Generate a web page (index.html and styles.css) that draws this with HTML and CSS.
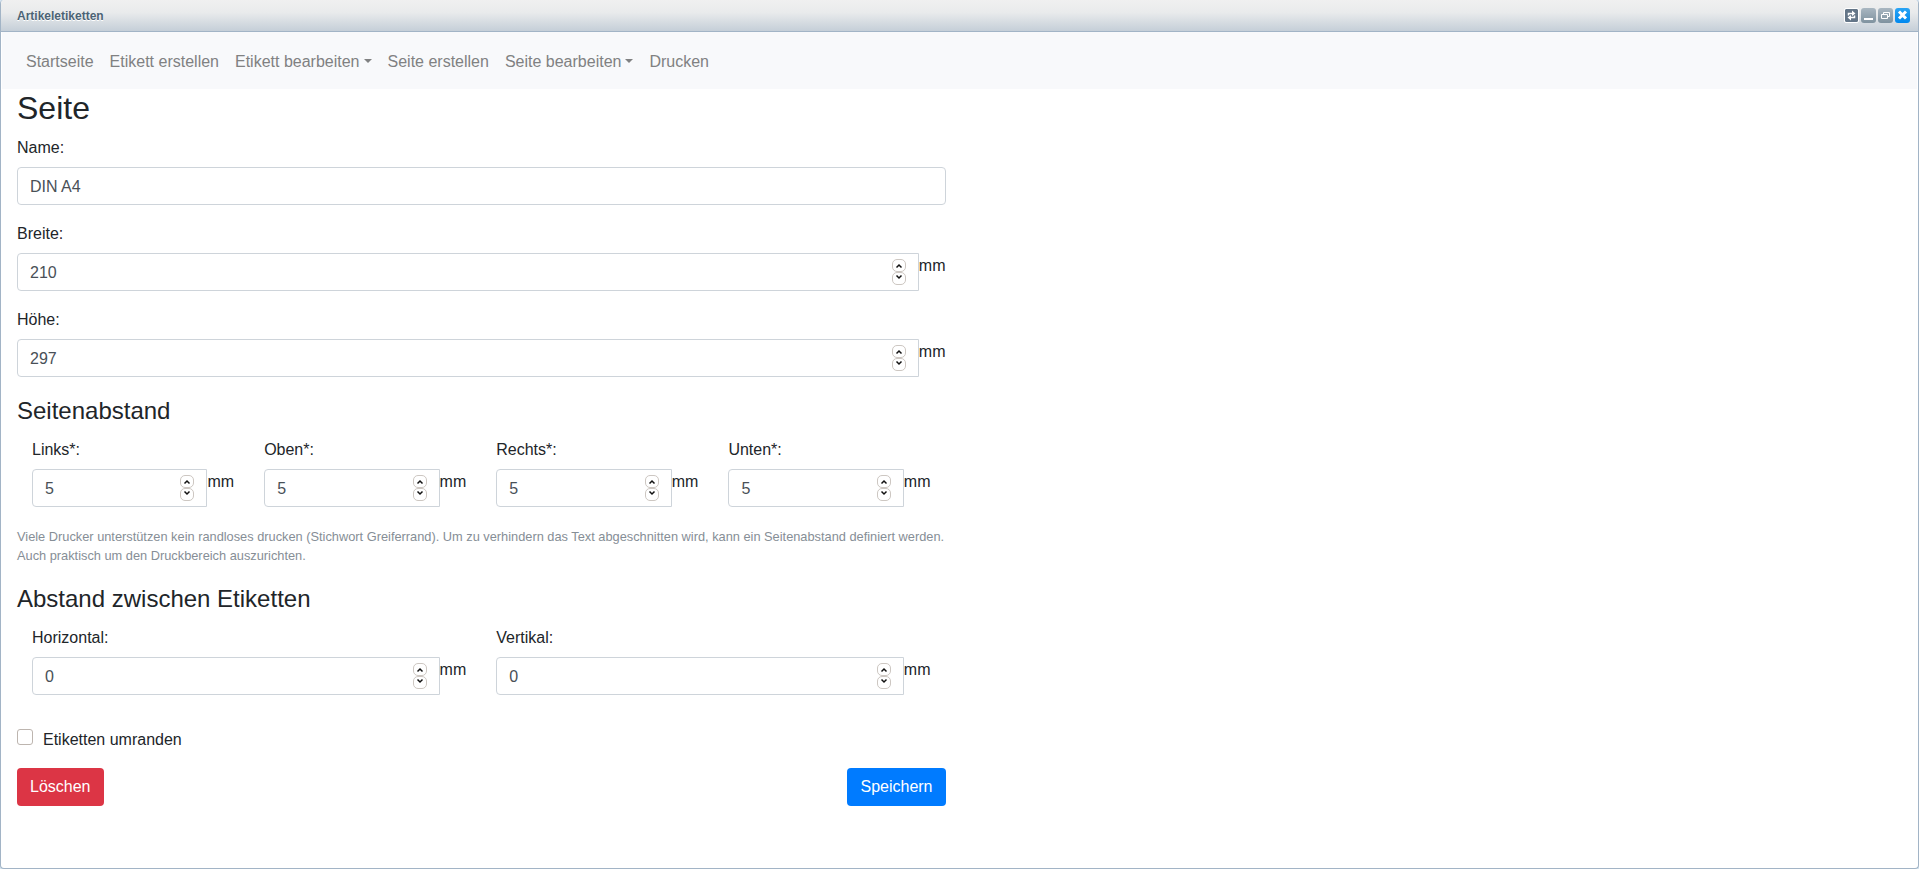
FILE: index.html
```html
<!DOCTYPE html>
<html lang="de">
<head>
<meta charset="utf-8">
<title>Artikeletiketten</title>
<link rel="stylesheet" href="styles.css">
</head>
<body>
<div class="window">
  <header class="titlebar">
    <span class="titlebar-text">Artikeletiketten</span>
    <div class="tools">
      <button class="tool tool-refresh" type="button" aria-label="Neu laden"><svg width="13" height="13" viewBox="0 0 13 13"><path d="M3.500 6.500V4.500H7.500M9.500 6.500V8.500H5.500" fill="none" stroke="#fff" stroke-width="1.500"/><path d="M7 1.500L10.500 4.500L7 7ZM6 6L2.500 8.500L6 11.500Z" fill="#fff"/></svg></button>
      <button class="tool" type="button" aria-label="Minimieren"><svg width="15" height="15" viewBox="0 0 15 15"><path d="M3 10h9v2H3z" fill="#fff"/></svg></button>
      <button class="tool" type="button" aria-label="Wiederherstellen"><svg width="15" height="15" viewBox="0 0 15 15"><path d="M5.500 6V4.500H11.500V8.500H10M3.500 6.500H9.500V10.500H3.500Z" fill="none" stroke="#fff"/></svg></button>
      <button class="tool tool-close" type="button" aria-label="Schließen"><svg width="15" height="15" viewBox="0 0 15 15"><path d="M4 3.500L11 10.500M11 3.500L4 10.500" fill="none" stroke="#fff" stroke-width="3"/></svg></button>
    </div>
  </header>
  <nav class="navbar">
    <a class="nav-link" href="#">Startseite</a>
    <a class="nav-link" href="#">Etikett erstellen</a>
    <a class="nav-link nav-drop" href="#">Etikett bearbeiten</a>
    <a class="nav-link" href="#">Seite erstellen</a>
    <a class="nav-link nav-drop" href="#">Seite bearbeiten</a>
    <a class="nav-link" href="#">Drucken</a>
  </nav>
  <main class="content">
    <h1 class="heading">Seite</h1>
    <form class="form">
      <div class="group">
        <label class="label" for="name">Name:</label>
        <input class="text-input" id="name" type="text" value="DIN A4">
      </div>
      <div class="group">
        <label class="label" for="breite">Breite:</label>
        <div class="measure">
          <div class="number"><input class="number-input" id="breite" type="number" value="210"><span class="stepper"><button class="step" type="button" aria-label="Mehr"><svg width="12" height="11" viewBox="0 0 12 11"><path d="M3.500 7.500L6 5L8.500 7.500"/></svg></button><button class="step" type="button" aria-label="Weniger"><svg width="12" height="11" viewBox="0 0 12 11"><path d="M3.500 2.500L6 5L8.500 2.500"/></svg></button></span></div>
          <span class="unit">mm</span>
        </div>
      </div>
      <div class="group">
        <label class="label" for="hoehe">Höhe:</label>
        <div class="measure">
          <div class="number"><input class="number-input" id="hoehe" type="number" value="297"><span class="stepper"><button class="step" type="button" aria-label="Mehr"><svg width="12" height="11" viewBox="0 0 12 11"><path d="M3.500 7.500L6 5L8.500 7.500"/></svg></button><button class="step" type="button" aria-label="Weniger"><svg width="12" height="11" viewBox="0 0 12 11"><path d="M3.500 2.500L6 5L8.500 2.500"/></svg></button></span></div>
          <span class="unit">mm</span>
        </div>
      </div>
      <fieldset class="section">
        <legend class="legend">Seitenabstand</legend>
        <div class="row">
          <div class="col">
            <label class="label" for="links">Links*:</label>
            <div class="measure">
              <div class="number"><input class="number-input" id="links" type="number" value="5"><span class="stepper"><button class="step" type="button" aria-label="Mehr"><svg width="12" height="11" viewBox="0 0 12 11"><path d="M3.500 7.500L6 5L8.500 7.500"/></svg></button><button class="step" type="button" aria-label="Weniger"><svg width="12" height="11" viewBox="0 0 12 11"><path d="M3.500 2.500L6 5L8.500 2.500"/></svg></button></span></div>
              <span class="unit">mm</span>
            </div>
          </div>
          <div class="col">
            <label class="label" for="oben">Oben*:</label>
            <div class="measure">
              <div class="number"><input class="number-input" id="oben" type="number" value="5"><span class="stepper"><button class="step" type="button" aria-label="Mehr"><svg width="12" height="11" viewBox="0 0 12 11"><path d="M3.500 7.500L6 5L8.500 7.500"/></svg></button><button class="step" type="button" aria-label="Weniger"><svg width="12" height="11" viewBox="0 0 12 11"><path d="M3.500 2.500L6 5L8.500 2.500"/></svg></button></span></div>
              <span class="unit">mm</span>
            </div>
          </div>
          <div class="col">
            <label class="label" for="rechts">Rechts*:</label>
            <div class="measure">
              <div class="number"><input class="number-input" id="rechts" type="number" value="5"><span class="stepper"><button class="step" type="button" aria-label="Mehr"><svg width="12" height="11" viewBox="0 0 12 11"><path d="M3.500 7.500L6 5L8.500 7.500"/></svg></button><button class="step" type="button" aria-label="Weniger"><svg width="12" height="11" viewBox="0 0 12 11"><path d="M3.500 2.500L6 5L8.500 2.500"/></svg></button></span></div>
              <span class="unit">mm</span>
            </div>
          </div>
          <div class="col">
            <label class="label" for="unten">Unten*:</label>
            <div class="measure">
              <div class="number"><input class="number-input" id="unten" type="number" value="5"><span class="stepper"><button class="step" type="button" aria-label="Mehr"><svg width="12" height="11" viewBox="0 0 12 11"><path d="M3.500 7.500L6 5L8.500 7.500"/></svg></button><button class="step" type="button" aria-label="Weniger"><svg width="12" height="11" viewBox="0 0 12 11"><path d="M3.500 2.500L6 5L8.500 2.500"/></svg></button></span></div>
              <span class="unit">mm</span>
            </div>
          </div>
        </div>
        <small class="help">Viele Drucker unterstützen kein randloses drucken (Stichwort Greiferrand). Um zu verhindern das Text abgeschnitten wird, kann ein Seitenabstand definiert werden. Auch praktisch um den Druckbereich auszurichten.</small>
      </fieldset>
      <fieldset class="section">
        <legend class="legend">Abstand zwischen Etiketten</legend>
        <div class="row">
          <div class="col">
            <label class="label" for="horizontal">Horizontal:</label>
            <div class="measure">
              <div class="number"><input class="number-input" id="horizontal" type="number" value="0"><span class="stepper"><button class="step" type="button" aria-label="Mehr"><svg width="12" height="11" viewBox="0 0 12 11"><path d="M3.500 7.500L6 5L8.500 7.500"/></svg></button><button class="step" type="button" aria-label="Weniger"><svg width="12" height="11" viewBox="0 0 12 11"><path d="M3.500 2.500L6 5L8.500 2.500"/></svg></button></span></div>
              <span class="unit">mm</span>
            </div>
          </div>
          <div class="col">
            <label class="label" for="vertikal">Vertikal:</label>
            <div class="measure">
              <div class="number"><input class="number-input" id="vertikal" type="number" value="0"><span class="stepper"><button class="step" type="button" aria-label="Mehr"><svg width="12" height="11" viewBox="0 0 12 11"><path d="M3.500 7.500L6 5L8.500 7.500"/></svg></button><button class="step" type="button" aria-label="Weniger"><svg width="12" height="11" viewBox="0 0 12 11"><path d="M3.500 2.500L6 5L8.500 2.500"/></svg></button></span></div>
              <span class="unit">mm</span>
            </div>
          </div>
        </div>
      </fieldset>
      <div class="check">
        <input class="checkbox" id="umranden" type="checkbox">
        <label for="umranden">Etiketten umranden</label>
      </div>
      <div class="actions">
        <button class="button button-danger" type="button">Löschen</button>
        <button class="button button-primary" type="button">Speichern</button>
      </div>
    </form>
  </main>
</div>
</body>
</html>
```
FILE: styles.css
```css
* {
  box-sizing: border-box;
}

body {
  margin: 0;
  background: #d5e4f0;
  color: #212529;
  font: 16px/24px "Liberation Sans", Arial, sans-serif;
}

button,
input {
  font: inherit;
}

.window {
  display: flex;
  flex-direction: column;
  min-height: 100vh;
  border: 1px solid #a2b4c6;
  border-top: 0;
  border-radius: 4px;
  background: #fff;
  overflow: hidden;
}

.titlebar {
  display: flex;
  align-items: center;
  justify-content: space-between;
  height: 32px;
  padding: 0 8px 0 16px;
  border-bottom: 1px solid #a2b4c6;
  background: linear-gradient(#f0f0f0, #e9ebec 40%, #c5cfd8);
}

.titlebar-text {
  color: #4b6375;
  font-size: 12px;
  font-weight: bold;
  text-shadow: 0 1px 0 #fff;
}

.tools {
  display: flex;
  align-items: center;
  gap: 2px;
}

.tool {
  display: flex;
  padding: 0;
  border: 0;
  border-radius: 3px;
  background: linear-gradient(#a9b7c1, #7f929f);
}

.tool-refresh {
  border-radius: 1px;
  outline: 1px solid #fff;
  margin-right: 1px;
  background: #647688;
}

.tool-close {
  background: linear-gradient(#2aa4f4, #0088ee);
}

.navbar {
  display: flex;
  margin: 0 1px;
  padding: 10px 16px 7px;
  background: #f8f9fb;
}

.nav-link {
  padding: 8px;
  color: #808182;
  text-decoration: none;
}

.nav-drop::after {
  content: "";
  display: inline-block;
  margin-left: 4px;
  vertical-align: 4px;
  border: 4px solid transparent;
  border-top-color: currentColor;
  border-bottom: 0;
}

.content {
  width: 50%;
  padding: 0 14px 0 16px;
}

.heading {
  margin: 0 0 9px;
  font-size: 32px;
  font-weight: normal;
  line-height: 38px;
}

.group {
  margin-bottom: 17px;
}

.label {
  display: block;
  margin-bottom: 7px;
}

.text-input,
.number {
  border: 1px solid #ced4da;
  border-radius: 4px;
  background: #fff;
}

.text-input,
.number-input {
  color: #495057;
}

.text-input {
  display: block;
  width: 100%;
  height: 38px;
  padding: 7px 12px 5px;
}

.measure {
  display: flex;
  align-items: flex-start;
}

.unit {
  padding-top: 1px;
}

.number {
  display: flex;
  flex: 1;
  align-items: center;
  min-width: 0;
  height: 38px;
  padding: 0 12px;
  border-radius: 4px 0 0 4px;
}

.number-input {
  flex: 1;
  min-width: 0;
  height: 26px;
  padding: 2px 0 0;
  border: 0;
  outline: 0;
  background: none;
  appearance: textfield;
}

.number-input::-webkit-inner-spin-button {
  appearance: none;
  margin: 0;
}

.stepper {
  display: flex;
  flex-direction: column;
}

.step {
  display: flex;
  padding: 0;
  border: 1px solid #cdc7c2;
  border-radius: 5px;
  background: #fff;
}

.step path {
  fill: none;
  stroke: #111;
  stroke-width: 1.5px;
}

.section {
  min-width: 0;
  margin: 0 0 17px;
  padding: 0;
  border: 0;
}

.legend {
  width: 100%;
  margin-bottom: 10px;
  padding: 0;
  font-size: 24px;
  line-height: 34px;
}

.row {
  display: flex;
}

.col {
  flex: 1;
  min-width: 0;
  padding: 0 15px;
  margin-bottom: 16px;
}

.help {
  display: block;
  margin-top: 4px;
  color: #868e96;
  font-size: 80%;
  line-height: 19px;
}

.check {
  display: flex;
  gap: 10px;
  margin-bottom: 16px;
}

.checkbox {
  appearance: none;
  width: 16px;
  height: 16px;
  margin: 1px 0 0;
  border: 1px solid #bdb5af;
  border-radius: 3px;
  background: #fff;
}

.actions {
  display: flex;
  justify-content: space-between;
}

.button {
  height: 38px;
  padding: 0 13px;
  border: 0;
  border-radius: 4px;
  color: #fff;
}

.button-danger {
  background: #dc3545;
}

.button-primary {
  background: #007bff;
}
```
